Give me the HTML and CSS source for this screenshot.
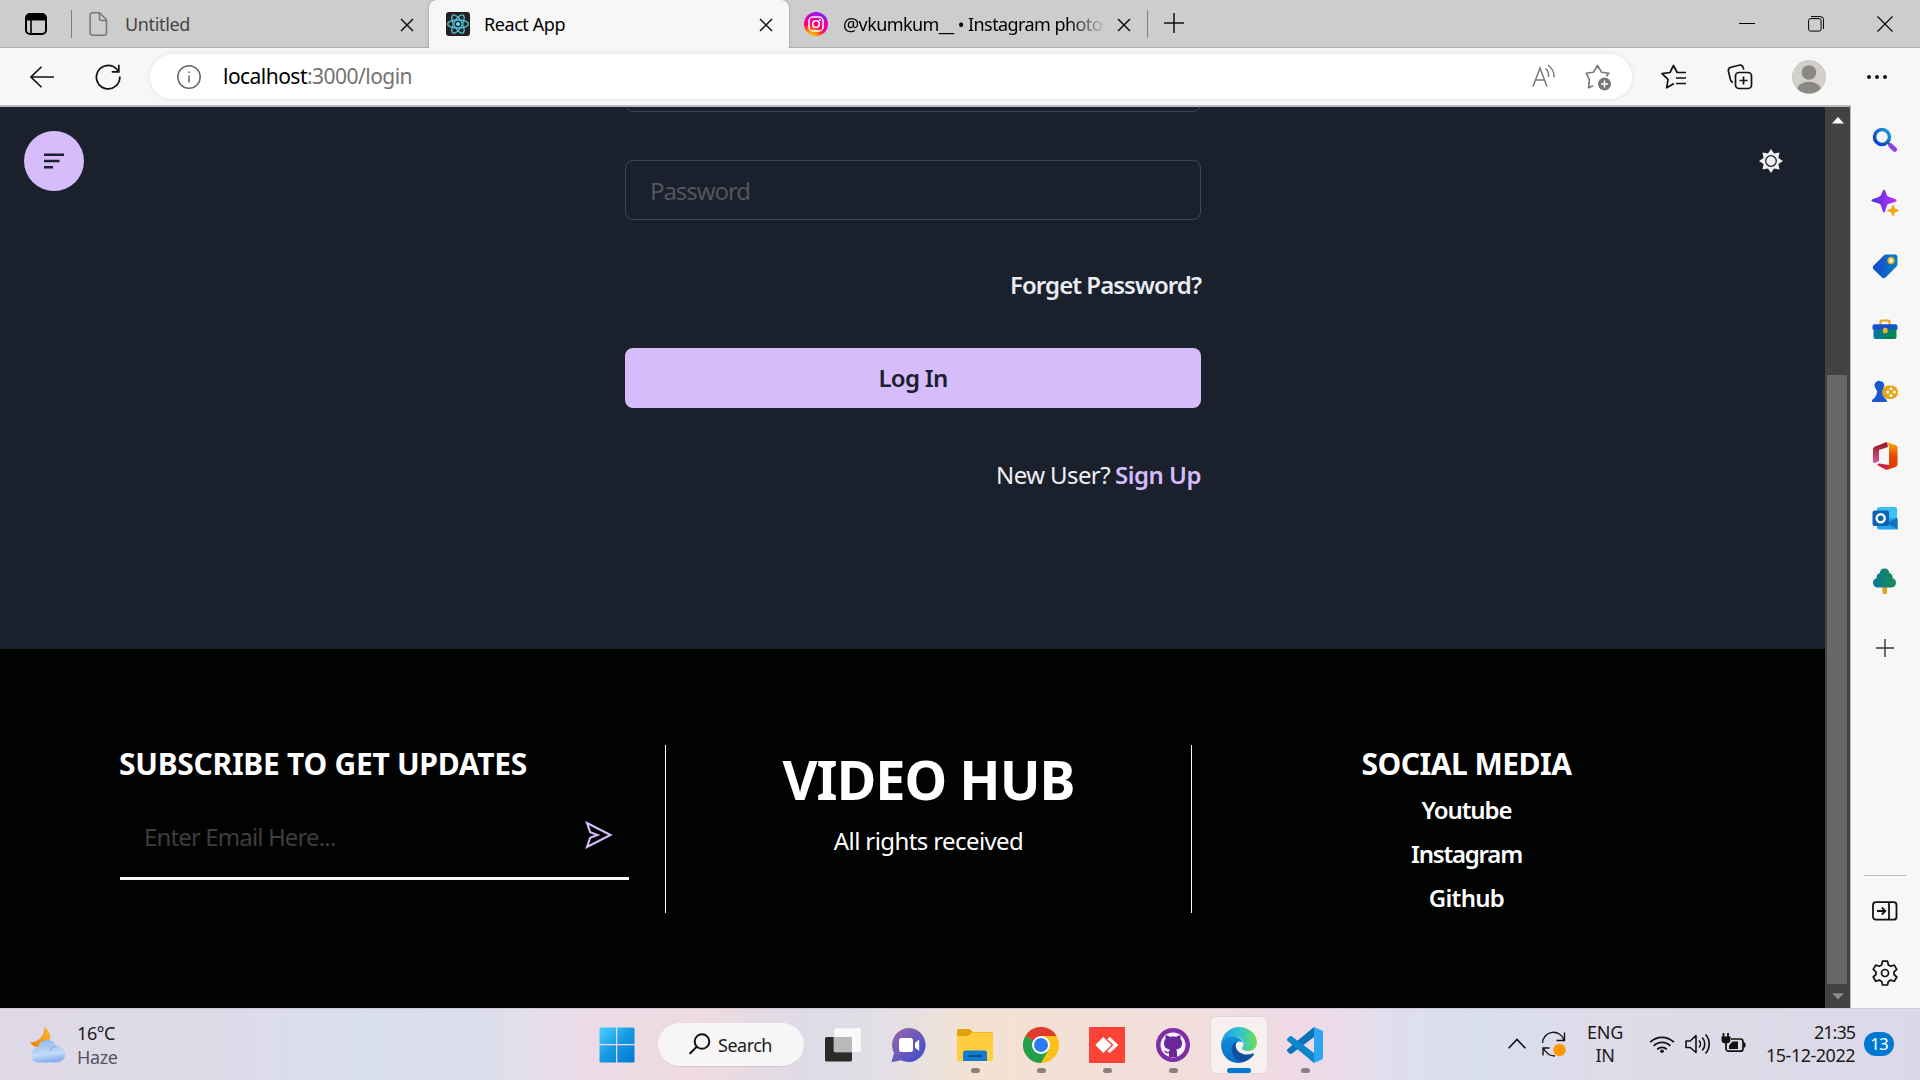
FILE: index.html
```html
<!DOCTYPE html>
<html lang="en">
<head>
<meta charset="utf-8">
<title>React App</title>
<link rel="stylesheet" href="styles.css">
</head>
<body>
<div class="desktop">

  <header class="tabstrip">
    <div class="workspaces">
      <svg width="24" height="24" viewBox="0 0 24 24" fill="none" stroke="#000" stroke-width="2"><rect x="2" y="2" width="20" height="20" rx="4"/><path d="M2 6a4 4 0 0 1 4-4h12a4 4 0 0 1 4 4v2.500H2z" fill="#000" stroke="none"/><path d="M7 8v14" stroke-width="1.600"/></svg>
    </div>
    <div class="tab tab-first">
      <svg class="favicon" width="24" height="24" viewBox="0 0 24 24" fill="none" stroke="#777" stroke-width="1.500"><path d="M5.500.8h7l7 7v13a2.400 2.400 0 0 1-2.400 2.400H5.500a2.400 2.400 0 0 1-2.400-2.400V3.200A2.400 2.400 0 0 1 5.500.8z"/><path d="M12.500 1v5.500a2 2 0 0 0 2 2h5"/></svg>
      <span class="tab-title muted">Untitled</span>
      <svg class="close" width="14" height="14" viewBox="0 0 14 14" stroke="#111" stroke-width="1.500"><path d="M1 1l12 12M13 1L1 13"/></svg>
    </div>
    <div class="tab tab-active">
      <svg class="favicon" width="24" height="24" viewBox="0 0 24 24"><rect width="24" height="24" rx="3" fill="#222"/><g fill="none" stroke="#53c1de" stroke-width="1.300"><ellipse cx="12" cy="12" rx="10.300" ry="4"/><ellipse cx="12" cy="12" rx="10.300" ry="4" transform="rotate(60 12 12)"/><ellipse cx="12" cy="12" rx="10.300" ry="4" transform="rotate(120 12 12)"/></g><circle cx="12" cy="12" r="2" fill="#61dafb"/></svg>
      <span class="tab-title">React App</span>
      <svg class="close" width="14" height="14" viewBox="0 0 14 14" stroke="#111" stroke-width="1.500"><path d="M1 1l12 12M13 1L1 13"/></svg>
    </div>
    <div class="tab tab-last">
      <svg class="favicon" width="24" height="24" viewBox="0 0 24 24"><defs><radialGradient id="ig" cx=".3" cy="1.050" r="1.100"><stop offset="0" stop-color="#ffd600"/><stop offset=".25" stop-color="#ff8a00"/><stop offset=".5" stop-color="#ff0169"/><stop offset=".75" stop-color="#e300b8"/><stop offset="1" stop-color="#7a1cff"/></radialGradient></defs><circle cx="12" cy="12" r="12" fill="url(#ig)"/><g fill="none" stroke="#fff" stroke-width="1.500"><rect x="5" y="5" width="14" height="14" rx="4"/><circle cx="12" cy="12" r="3.300"/></g><circle cx="16" cy="8" r="1" fill="#fff"/></svg>
      <span class="tab-title tab-fade">@vkumkum__ • Instagram photos</span>
      <svg class="close" width="14" height="14" viewBox="0 0 14 14" stroke="#111" stroke-width="1.500"><path d="M1 1l12 12M13 1L1 13"/></svg>
    </div>
    <svg class="new-tab" width="22" height="22" viewBox="0 0 22 22" stroke="#111" stroke-width="1.500"><path d="M11 1v20M1 11h20"/></svg>
    <div class="window-controls">
      <svg width="16" height="16" viewBox="0 0 16 16" stroke="#000" fill="none"><path d="M0 7.500h16"/></svg>
      <svg width="16" height="16" viewBox="0 0 16 16" stroke="#000" fill="none"><rect x=".6" y="2.600" width="12.500" height="12.500" rx="2"/><path d="M3 .6h9.500a3 3 0 0 1 3 3V13"/></svg>
      <svg width="16" height="16" viewBox="0 0 16 16" stroke="#000" fill="none" stroke-width="1.100"><path d="M.5.5l15 15M15.500.5l-15 15"/></svg>
    </div>
  </header>

  <nav class="toolbar">
    <svg class="back" width="24" height="22" viewBox="0 0 24 22" fill="none" stroke="#111" stroke-width="1.600"><path d="M24 11H1M11.500.800L1 11l10.500 10.200"/></svg>
    <svg class="reload" width="26" height="26" viewBox="0 0 26 26" fill="none" stroke="#111" stroke-width="1.700"><path d="M24.800 12.500A11.700 11.700 0 1 1 21.500 5l2 2.300"/><path d="M23.800.800v7h-7"/></svg>
    <div class="address">
      <svg width="24" height="24" viewBox="0 0 24 24" fill="none" stroke="#666" stroke-width="1.500"><circle cx="12" cy="12" r="11.200"/><path d="M12 10.500v7"/><circle cx="12" cy="7.200" r=".5" fill="#666" stroke-width="1"/></svg>
      <span class="url">localhost<span class="url-rest">:3000/login</span></span>
      <svg class="read-aloud" width="24" height="24" viewBox="0 0 24 24" fill="none" stroke="#777" stroke-width="1.500"><path d="M1 22.500L8 4l7 18.500M3.500 16h9M13.500 4.500c2.500 2 3.500 5 3 8.500M16 1c4 3 6.500 7.500 6 12.500"/></svg>
      <svg class="add-fav" width="28" height="28" viewBox="0 0 28 28"><path d="M8 21.800l-4.500 2 .9-8.300L1.200 9.200l7.300-1L12.500 1.500l4 6.700 7.300 1-2.500 3" fill="none" stroke="#777" stroke-width="1.600" stroke-linejoin="round"/><circle cx="19.500" cy="20" r="6.500" fill="#777"/><path d="M19.500 16.500v7M16 20h7" stroke="#fff" stroke-width="1.400"/></svg>
    </div>
    <div class="tool-icons">
      <svg width="26" height="26" viewBox="0 0 26 26" fill="none" stroke="#111" stroke-width="1.700" stroke-linejoin="round"><path d="M13 19.500l-7.300 4.300 1.300-8.500L1 9.700l8-1.200L12.500 1.500l3.700 7H25M15 14h10M15 19.500h10"/></svg>
      <svg width="26" height="26" viewBox="0 0 26 26" fill="none" stroke="#111" stroke-width="1.700"><rect x="8.500" y="8.500" width="16" height="16" rx="3.500"/><path d="M16.500 12.500v8M12.500 16.500h8M6 18.500c-1.500-.5-2.200-1.500-2.600-3L1.500 7.500C1 5 2 3.800 4 3.300l8-2c2.200-.5 3.800.3 4.300 2.700l.4 1.500"/></svg>
      <svg class="avatar" width="34" height="34" viewBox="0 0 34 34"><defs><clipPath id="av"><circle cx="17" cy="17" r="16.500"/></clipPath></defs><circle cx="17" cy="17" r="16.500" fill="#d2d0cc" stroke="#bbb9b5" stroke-width=".6"/><g fill="#8b8783" clip-path="url(#av)"><circle cx="17" cy="12.500" r="7.300"/><ellipse cx="17" cy="30" rx="12" ry="8.300"/></g></svg>
      <svg width="22" height="6" viewBox="0 0 22 6" fill="#111"><circle cx="3" cy="3" r="2"/><circle cx="11" cy="3" r="2"/><circle cx="19" cy="3" r="2"/></svg>
    </div>
  </nav>

  <div class="browser-body">
    <div class="page">
      <main class="login">
        <button class="menu-btn" aria-label="Menu"><svg width="20" height="16" viewBox="0 0 20 16" fill="#1a202c"><path d="M0 .5h20v2.600H0zM0 6.700h15.500v2.600H0zM0 13h9v2.600H0z"/></svg></button>
        <svg class="theme-btn" width="24" height="24" viewBox="0 0 24 24"><path fill="#f1f1f3" d="M12 0l3 4.600 5.500-1.100-1.100 5.500L24 12l-4.600 3 1.100 5.500-5.500-1.100L12 24l-3-4.600-5.500 1.100 1.100-5.500L0 12l4.600-3-1.100-5.500L9 4.600z"/><circle cx="12" cy="12" r="5.300" fill="#f1f1f3" stroke="#1a202c" stroke-width="1.300"/></svg>
        <form class="login-form">
          <div class="field field-email"></div>
          <div class="field"><span class="w-password">Password</span></div>
          <div class="forget">Forget Password?</div>
          <div class="login-btn">Log In</div>
          <div class="signup"><span class="new-user">New User?</span> <b>Sign Up</b></div>
        </form>
      </main>
      <footer class="footer">
        <section class="subscribe">
          <h2 class="sub-title">SUBSCRIBE TO GET UPDATES</h2>
          <div class="email-row">
            <span class="email-hint">Enter Email Here...</span>
            <svg width="28" height="28" viewBox="0 0 28 28" fill="none" stroke="#d6bcfa" stroke-width="2.100"><path d="M2 2l23.500 12L2 26l3.200-9.300 7.300-2.700-7.300-2.700z"/></svg>
          </div>
        </section>
        <section class="brand">
          <h1>VIDEO HUB</h1>
          <p>All rights received</p>
        </section>
        <section class="social">
          <h2>SOCIAL MEDIA</h2>
          <a class="yt">Youtube</a>
          <a class="insta">Instagram</a>
          <a class="gh">Github</a>
        </section>
      </footer>
    </div>
    <div class="scrollbar">
      <svg width="12" height="7" viewBox="0 0 12 7"><path d="M0 6.500L6 0l6 6.500z" fill="#fff"/></svg>
      <div class="thumb"></div>
      <svg class="down" width="12" height="7" viewBox="0 0 12 7"><path d="M0 .3L6 6.500l6-6.200z" fill="#8b8b8b"/></svg>
    </div>
    <aside class="sidebar">
      <svg width="28" height="28" viewBox="0 0 28 28"><defs><linearGradient id="b1" x1="0" y1="1" x2="1" y2="0"><stop offset="0" stop-color="#0a35c4"/><stop offset="1" stop-color="#1aa0d8"/></linearGradient><linearGradient id="p1" x1="0" x2="1"><stop offset="0" stop-color="#4a35d8"/><stop offset="1" stop-color="#c32cff"/></linearGradient></defs><circle cx="11" cy="11" r="7.500" fill="none" stroke="url(#b1)" stroke-width="3.500"/><path d="M16.500 16.500l3 3" stroke="#444" stroke-width="1.800"/><path d="M19.500 19.500l4.300 4" stroke="#8a45e8" stroke-width="4.500" stroke-linecap="round"/></svg>
      <svg width="28" height="28" viewBox="0 0 28 28"><path d="M13 1c1 0 1.500 5 3 6.500S25 10 25 11.500s-7.500 2-9 3.500-2 8-3 8-1.700-6.500-3.200-8S1 12.500 1 11.500 8.300 9 9.800 7.500 12 1 13 1z" fill="url(#p1)" stroke="url(#p1)" stroke-width="1.200"/><path d="M22 16c.8 0 1 3 1.800 3.700s3.700 1 3.700 1.800-3 1-3.700 1.800S22.800 27 22 27s-1-3-1.700-3.700-3.800-1-3.800-1.800 3-1 3.800-1.800S21.200 16 22 16z" fill="#eaa80c" stroke="#eaa80c" stroke-width=".6"/></svg>
      <svg width="28" height="28" viewBox="0 0 28 28"><path d="M15 2.500h9c1.500 0 2.500 1 2.500 2.500v7c0 1-.4 2-1.200 2.700L14.500 25.500c-1 1-2.500 1-3.500 0l-8.500-8.300c-1-1-1-2.700.2-3.700L13 3.200c.6-.5 1.200-.7 2-.7z" fill="url(#b2)"/><defs><linearGradient id="b2" x1="0" x2="1"><stop offset="0" stop-color="#1846cf"/><stop offset="1" stop-color="#0880bd"/></linearGradient></defs><circle cx="20" cy="8.500" r="2.800" fill="#f4f4f4" stroke="#e9b41d" stroke-width="1.700"/></svg>
      <svg width="28" height="28" viewBox="0 0 28 28"><path d="M9.500 9.500V7a1.500 1.500 0 0 1 1.500-1.500h6A1.500 1.500 0 0 1 18.500 7v2.500" fill="none" stroke="#e8a317" stroke-width="2.200"/><path d="M2.500 12h23v10a2 2 0 0 1-2 2h-19a2 2 0 0 1-2-2z" fill="url(#g1)"/><defs><linearGradient id="g1" x1="0" x2="1"><stop offset="0" stop-color="#0875a8"/><stop offset="1" stop-color="#058a42"/></linearGradient></defs><path d="M3.500 9.300h21a2 2 0 0 1 2 2V14.500h-25v-3.200a2 2 0 0 1 2-2z" fill="#1450cb"/><rect x="12" y="12.800" width="4.500" height="5.500" rx="1.500" fill="#f0b52a"/></svg>
      <svg width="28" height="28" viewBox="0 0 28 28"><rect x="11" y="7.500" width="16" height="13.500" rx="6.700" fill="#e4a418"/><g fill="#fff"><circle cx="20" cy="10.800" r="1.500"/><circle cx="20" cy="17.400" r="1.500"/><circle cx="16.700" cy="14.100" r="1.500"/><circle cx="23.300" cy="14.100" r="1.500"/></g><path d="M9 3a4.500 4.500 0 0 1 3 7.700v1.500h-1c0 4 1 6 3 8.300 1.500.500 2 1.500 2 3.500H1c0-2 .5-3 2-3.500 2-2.300 3-4.300 3.200-8.300H5v-1.500A4.500 4.500 0 0 1 9 3z" fill="#1c57cd"/></svg>
      <svg width="28" height="30" viewBox="0 0 28 30"><defs><linearGradient id="o1" y2="1" x2="0"><stop offset="0" stop-color="#8c1717"/><stop offset="1" stop-color="#e0559c"/></linearGradient><linearGradient id="o2" y2="1" x2="0"><stop offset="0" stop-color="#ffae00"/><stop offset=".5" stop-color="#e8480a"/><stop offset="1" stop-color="#d83b01"/></linearGradient></defs><path d="M16 1L4 5.500C2.500 6.200 2 7 2 8.500v12c0 1.500 1.500 2 2.800 1L8 20V9l9-3z" fill="url(#o1)"/><path d="M15.500 1l9 3c1.200.4 2 1.300 2 2.700v16.500c0 1.400-.7 2.300-2 2.700L15.500 29 18 25V5z" fill="url(#o2)"/><path d="M8 22.500l10 1.500v2l-2.500 3-8.500-4.500c-1-.7-.3-2 1-2z" fill="#cf2140"/></svg>
      <svg class="outlook" width="28" height="28" viewBox="0 0 28 28"><path d="M8 3h16a2 2 0 0 1 2 2v9H6V5a2 2 0 0 1 2-2z" fill="#3bc0f4"/><path d="M6 14h20.500v10.500a1 1 0 0 1-1 1H8a2 2 0 0 1-2-2z" fill="#21a6ec"/><path d="M26.500 14v11.500L15 19z" fill="#1271ba"/><rect x="1.500" y="6.500" width="16.500" height="15.500" rx="2" fill="#0b64b5"/><circle cx="9.700" cy="14.200" r="4" fill="none" stroke="#fff" stroke-width="2.400"/></svg>
      <svg width="28" height="28" viewBox="0 0 28 28"><rect x="11.500" y="19" width="4.500" height="8" rx="1" fill="#eda112"/><path d="M13.500 1.500c3 0 4.800 2 4.800 4.500 2.200.5 3.700 2.300 3.200 5 2.200.8 3.500 2.200 3.500 4.700 0 3-2 4.800-5 4.800H7c-3 0-5-1.800-5-4.500 0-2.500 1.500-4.200 3.700-5-.5-2.500 1-4.500 3.200-5 0-2.500 1.800-4.500 4.600-4.500z" fill="url(#g2)"/><defs><linearGradient id="g2" x1="0" x2="1"><stop offset="0" stop-color="#0b7794"/><stop offset="1" stop-color="#198c54"/></linearGradient></defs></svg>
      <svg class="side-plus" width="18" height="18" viewBox="0 0 18 18" stroke="#333" stroke-width="1.400"><path d="M9 0v18M0 9h18"/></svg>
      <div class="side-bottom">
        <svg width="26" height="20" viewBox="0 0 26 20" fill="none" stroke="#111" stroke-width="1.800"><rect x="1" y="1.200" width="23.500" height="17.500" rx="3"/><path d="M17 1v18M5 10h8M9.800 6.500l3.500 3.500-3.500 3.500"/></svg>
        <svg width="26" height="26" viewBox="0 0 26 26" fill="none" stroke="#111" stroke-width="1.700" stroke-linejoin="round"><circle cx="13" cy="13" r="3.500"/><path d="M10.500 1.200h5l.9 3.800 2.300 1.300 3.600-1.200 2.500 4.300-2.800 2.500v2.600l2.800 2.500-2.500 4.300-3.600-1.200-2.300 1.300-.9 3.600h-5l-.9-3.600-2.300-1.300-3.600 1.200-2.500-4.300L4 14.500v-2.600L1.200 9.400l2.500-4.300 3.600 1.200L9.600 5z"/></svg>
      </div>
    </aside>
  </div>

  <div class="taskbar">
    <div class="weather">
      <svg width="36" height="36" viewBox="0 0 36 36"><defs><linearGradient id="m" x1="1" y1="0" x2="0" y2="1"><stop offset="0" stop-color="#f7bd34"/><stop offset="1" stop-color="#ee7b13"/></linearGradient><linearGradient id="c" x2=".2" y2="1"><stop offset="0" stop-color="#8db5ee"/><stop offset=".7" stop-color="#c2dbf6"/><stop offset="1" stop-color="#8bb0ee"/></linearGradient></defs><path d="M14 0c6 3 8 10 4 15.500S5 23 0 15.500C8 15.500 15 9 14 0z" fill="url(#m)"/><path d="M9 35.500a7.500 7.500 0 0 1-1-15 9.500 9.500 0 0 1 18-1.800 8.400 8.400 0 0 1 1.500 16.800z" fill="url(#c)"/><path d="M19.500 23.500a8.400 8.400 0 0 1 7-4.500" stroke="#7ba3e4" stroke-width="1" fill="none"/></svg>
      <div class="weather-text"><span class="temp">16°C</span><span class="haze">Haze</span></div>
    </div>
    <div class="apps">
      <svg class="start" width="36" height="36" viewBox="0 0 36 36"><defs><linearGradient id="w" x2="1" y2="1"><stop offset="0" stop-color="#4cd0ff"/><stop offset=".5" stop-color="#1799e3"/><stop offset="1" stop-color="#0077d6"/></linearGradient></defs><path fill="url(#w)" d="M2 .500h15v16.500H.500V2A1.500 1.500 0 0 1 2 .500zM18.200.500H34A1.500 1.500 0 0 1 35.500 2v15H18.200zM.500 18.200H17v17.300H2A1.500 1.500 0 0 1 .500 34zM18.200 18.200h17.300V34a1.500 1.500 0 0 1-1.500 1.500H18.200z"/></svg>
      <div class="search"><svg width="22" height="22" viewBox="0 0 22 22" fill="none" stroke="#111" stroke-width="2" stroke-linecap="round"><circle cx="13" cy="8.500" r="7.300"/><path d="M7.500 14L1.200 20.300"/></svg><span>Search</span></div>
      <div class="tiles">
        <div class="tile"><svg width="36" height="36" viewBox="0 0 36 36"><rect x="0" y="10" width="27" height="24.500" rx="1.500" fill="#2b2b2a"/><rect x="9" y="1" width="27" height="24" rx="1.500" fill="#fafafa" stroke="#ddd" stroke-width=".6"/><path d="M9 10h18v15H9z" fill="#b9b9b9"/></svg></div>
        <div class="tile"><svg width="36" height="36" viewBox="0 0 36 36"><defs><linearGradient id="t" x1="0" y1=".3" x2=".7" y2="1"><stop offset="0" stop-color="#8b64ad"/><stop offset="1" stop-color="#4a50c8"/></linearGradient></defs><path d="M18 1a17 17 0 1 1-8 32.200L1.500 35c-.8 0-1-.6-.7-1.200L3 26A17 17 0 0 1 18 1z" fill="url(#t)"/><rect x="8" y="11" width="14" height="14" rx="2.500" fill="#fff"/><path d="M24 16l3.500-3h.7v10.500h-.7L24 20.500z" fill="#fff"/></svg></div>
        <div class="tile running"><svg width="36" height="36" viewBox="0 0 36 36"><path d="M0 3.500A1.500 1.500 0 0 1 1.500 2h11L16 5h18.500A1.500 1.500 0 0 1 36 6.500V12H0z" fill="#e0a30c"/><path d="M0 9h11l4-3.500h20A1 1 0 0 1 36 6.500V33a1 1 0 0 1-1 1H1a1 1 0 0 1-1-1z" fill="#ffce3f"/><path d="M6 34V26a2.500 2.500 0 0 1 2.500-2.500h19A2.500 2.500 0 0 1 30 26v8z" fill="#0f7cd0"/><path d="M11 29h14" stroke="#0b4f96" stroke-width="2"/></svg></div>
        <div class="tile running"><svg width="36" height="36" viewBox="0 0 36 36"><circle cx="18" cy="18" r="18" fill="#fbc116"/><path d="M18 18L2.400 9A18 18 0 0 1 33.600 9H18z" fill="#e03a2e"/><path d="M2.400 9A18 18 0 0 0 18 36l7.800-13.500L18 18z" fill="#24a04a"/><circle cx="18" cy="18" r="9" fill="#fff"/><circle cx="18" cy="18" r="7" fill="#2f7bf0"/></svg></div>
        <div class="tile running"><svg width="36" height="36" viewBox="0 0 36 36"><path fill="#fd4238" d="M0 0h36v36H0z"/><path d="M6.300 18l8-8 8 8-8 8z" fill="#fff"/><path d="M19.500 11l7.500 7-7.500 7" fill="none" stroke="#fff" stroke-width="3.300"/></svg></div>
        <div class="tile running"><svg width="36" height="36" viewBox="0 0 36 36"><circle cx="18" cy="18" r="17" fill="#7d2fa8"/><circle cx="18" cy="18" r="12.500" fill="#f3eef7"/><path d="M14 30v-4c-3 .8-4-.8-5-2.500 2 0 2.500 2 5 1.300 0-1 .4-1.800 1-2.300-4-.5-6-2.300-6-6.200 0-1.800.5-3 1.500-4-.3-1.500-.2-2.800.3-4 1.700 0 3 .8 4 1.600 2-.5 4.400-.5 6.400 0 1-.8 2.300-1.600 4-1.600.5 1.200.6 2.500.3 4 1 1 1.500 2.200 1.500 4 0 3.900-2 5.700-6 6.200.7.700 1 1.600 1 3V30z" fill="#6a2797"/></svg></div>
        <div class="tile current"><svg width="36" height="36" viewBox="0 0 36 36"><defs><linearGradient id="e1" x1="0" x2="1"><stop offset="0" stop-color="#1a9bdc"/><stop offset=".5" stop-color="#2ec3d6"/><stop offset="1" stop-color="#6be04e"/></linearGradient><linearGradient id="e2" y2="1" x2="0"><stop offset="0" stop-color="#128fd8"/><stop offset="1" stop-color="#0a6cc4"/></linearGradient></defs><path d="M0 17C1 7 9 0 18 0c10 0 18 7 18 15.500 0 5-4 8.500-8.500 8.500-4 0-6.500-1.500-6.500-2.800 0-1 1.500-1.700 1.500-4.200 0-4-4-7-9.500-7C7 10 2 13 0 17z" fill="url(#e1)"/><path d="M0 17.500c1.500-5 6-8 11-8 6 0 10 3 11 6.500-3-3-8-1-8 5 0 7 6 11.500 12 10.500C23 34.500 20 36 17 36 7 35.500 0 28 0 17.500z" fill="url(#e2)"/><path d="M15 15c-7 3-5 17 6 20.500 5-1.200 9.500-4 12-8 .4-.8-.2-1.200-1-.9C24 29.500 12.500 26 15 15z" fill="#0f4f9f"/></svg></div>
        <div class="tile running"><svg width="36" height="36" viewBox="0 0 36 36"><path d="M27 0v10L5 26.500c-1 .7-1.800.6-2.500 0L.6 24.700c-.8-.8-.8-1.900 0-2.600z" fill="#0873b8"/><path d="M27 36V26L5 9.500c-1-.7-1.800-.6-2.500 0L.6 11.300c-.8.800-.8 1.900 0 2.600z" fill="#0c86cd"/><path d="M27 0l7.500 3.300c1 .4 1.500 1.200 1.500 2.200v25c0 1-.5 1.800-1.500 2.200L27 36z" fill="#2aa7f0"/></svg></div>
      </div>
    </div>
    <div class="tray">
      <svg class="chev" width="18" height="11" viewBox="0 0 18 11" fill="none" stroke="#111" stroke-width="1.600"><path d="M.6 10.200L9 1.500l8.400 8.700"/></svg>
      <svg class="sync" width="26" height="26" viewBox="0 0 26 26" fill="none" stroke="#111" stroke-width="1.400"><path d="M1.500 12A11 11 0 0 1 23 9M23.500 1.500v8h-8M2 24.500V17h6.500M2.500 17.500C5 22 9 25 14 25"/><circle cx="18.500" cy="19" r="6.200" fill="#ff9800" stroke="none"/></svg>
      <div class="lang"><span>ENG</span><span>IN</span></div>
      <svg class="wifi" width="26" height="20" viewBox="0 0 26 20" fill="none" stroke="#111" stroke-width="1.800"><path d="M1.200 8.200a16.700 16.700 0 0 1 23.600 0M4.700 11.800a11.700 11.700 0 0 1 16.600 0M8.200 15.300a6.800 6.800 0 0 1 9.600 0"/><circle cx="13" cy="17.300" r="1.800" fill="#111" stroke="none"/></svg>
      <svg class="vol" width="26" height="22" viewBox="0 0 26 22" fill="none" stroke="#111" stroke-width="1.600" stroke-linejoin="round"><path d="M1 8v6.500h4.200L11 19.500V2.500L5.200 8zM14 7.500a5 5 0 0 1 0 7M17.200 4.500a9.500 9.500 0 0 1 0 13M20.500 1.500a14 14 0 0 1 0 19"/></svg>
      <svg class="bat" width="26" height="22" viewBox="0 0 26 22" fill="none" stroke="#111" stroke-width="1.700"><path d="M10 6h9.500a2.500 2.500 0 0 1 2.500 2.500v7.200a2.500 2.500 0 0 1-2.500 2.500H7.500A2.500 2.500 0 0 1 5 15.700V10"/><path d="M11.500 8.500H17v7.500H8v-3.500z" fill="#111" stroke="none"/><path d="M2.500 0v4M7 0v4" stroke-width="1.800"/><path d="M.5 3.500h9v3.500a3.500 3.500 0 0 1-3.500 3.200H4A3.500 3.500 0 0 1 .5 7zM22.500 9.500h1.200c1.200 0 1.300 5 0 5h-1.200z" fill="#111" stroke="none"/></svg>
      <div class="clock"><span class="time">21:35</span><span class="date">15-12-2022</span></div>
      <div class="badge"><span>13</span></div>
    </div>
  </div>
</div>
</body>
</html>
```
FILE: styles.css
```css
* { box-sizing: border-box; }
body { margin: 0; font-family: "Noto Sans", "Open Sans", sans-serif; overflow: hidden; }
h1, h2, p { margin: 0; }
svg { display: block; flex: none; }
span { white-space: nowrap; }

.desktop { width: 1920px; height: 1080px; display: flex; flex-direction: column; }

/* tab strip */
.tabstrip { height: 48px; background: #cdcdcd; display: flex; align-items: center; box-shadow: inset 0 -2px 1px -1px #aaa; }
.workspaces { width: 72px; height: 28px; border-right: 1.500px solid #808080; display: flex; align-items: center; padding-left: 24px; }
.tab { height: 48px; display: flex; align-items: center; font-size: 18px; }
.tab-first { width: 357px; padding: 0 15px 0 15px; letter-spacing: -.35px; }
.tab-active { width: 360px; padding: 0 16px 0 17px; background: #f7f7f7; border-radius: 8px 8px 0 0; letter-spacing: -.43px; box-shadow: 0 0 3px rgba(0,0,0,.3); clip-path: inset(0 -4px); }
.tab-last { width: 359px; padding: 0 17px 0 15px; letter-spacing: -.58px; position: relative; }
.tab-last::after { content: ""; position: absolute; right: 0; top: 10px; height: 28px; width: 1.500px; background: #808080; }
.tab-title { margin-left: 14px; line-height: 24px; flex: 1; padding-bottom: 1px; }
.tab-title.muted { color: #444; margin-left: 14px; }
.tab-title.tab-fade { margin-left: 15px; margin-right: 11px; overflow: hidden; width: 262px; -webkit-mask-image: linear-gradient(90deg, #000 225px, transparent 263px); mask-image: linear-gradient(90deg, #000 225px, transparent 263px); }
.close { margin-top: 1px; }
.new-tab { margin-left: 15px; margin-bottom: 2px; }
.window-controls { margin-left: auto; display: flex; gap: 53px; padding-right: 27px; }

/* toolbar */
.toolbar { height: 57px; background: #f7f7f7; display: flex; align-items: center; padding-left: 30px; }
.reload { margin-left: 41px; }
.address { margin-left: 29px; width: 1482px; height: 45px; border-radius: 23px; background: #fff; box-shadow: 0 0 5px rgba(0,0,0,.1); display: flex; align-items: center; padding: 0 19px 0 27px; }
.url { font-size: 21px; letter-spacing: -.53px; margin-left: 22px; line-height: 28px; flex: 1; color: #000; padding-bottom: 1px; }
.url-rest { color: #737373; }
.read-aloud { margin-right: 29px; margin-bottom: 2px; }
.add-fav { margin-top: 3px; }
.tool-icons { display: flex; align-items: center; margin-left: 29px; gap: 40px; }
.avatar { margin-left: -1px; }

/* browser body */
.browser-body { height: 903px; background: #f7f7f7; display: flex; }
.page { width: 1825px; border-top: 2px solid #bbb; display: flex; flex-direction: column; }
.login { height: 542px; background: #1a202c; overflow: hidden; position: relative; }
.menu-btn { position: absolute; left: 24px; top: 24px; width: 60px; height: 60px; border: 0; border-radius: 50%; background: #d6bcfa; display: flex; align-items: center; justify-content: center; }
.theme-btn { position: absolute; left: 1759px; top: 42px; }
.login-form { width: 576px; margin: -55px auto 0 625px; display: flex; flex-direction: column; font-size: 24px; line-height: 36px; }
.field { height: 60px; border: 1px solid #3f4552; border-radius: 8px; color: #51555e; padding: 12px 24px; letter-spacing: -1.070px; }
.field-email { margin-bottom: 48px; }
.forget { margin: 47px 0 45px; text-align: right; font-weight: 600; color: #e9ecf2; letter-spacing: -.95px; }
.login-btn { height: 60px; border-radius: 8px; background: #d6bcfa; color: #1a202c; text-align: center; line-height: 60px; font-weight: 600; letter-spacing: -.73px; }
.signup { margin-top: 49px; display: flex; gap: 5px; justify-content: flex-end; color: #eef0f4; }
.signup b { color: #d6bcfa; font-weight: 600; letter-spacing: -.5px; }
.new-user { letter-spacing: -.6px; }

.footer { height: 359px; background: #010202; color: #fff; padding: 96px 84px 0 120px; display: grid; grid-template-columns: 546px 526px 549px; grid-template-rows: 168px; text-align: center; }
.footer h2 { font-size: 30px; line-height: 38px; font-weight: 700; letter-spacing: -.5px; }
.subscribe { border-right: 1.500px solid #fff; padding-right: 36px; }
.subscribe h2.sub-title { text-align: left; letter-spacing: -.28px; margin-left: -1px; }
.email-row { margin-top: 22px; height: 75px; border-bottom: 3px solid #f5f7fa; padding: 0 16px 12px 24px; display: flex; justify-content: space-between; align-items: center; }
.email-hint { font-size: 24px; color: #3d3d3f; letter-spacing: -.87px; padding-top: 2px; }
.brand { border-right: 1.500px solid #fff; }
.brand h1 { font-size: 54px; line-height: 68px; letter-spacing: -.96px; }
.brand p { font-size: 24px; line-height: 36px; letter-spacing: -.6px; margin-top: 10px; }
.social a { display: block; font-size: 24px; font-weight: 600; line-height: 36px; margin-top: 8px; }
.social .yt { letter-spacing: -1.070px; margin-top: 9px; }
.insta { letter-spacing: -1.210px; }
.gh { letter-spacing: -.7px; }

.scrollbar { width: 26px; background: #424242; border-top: 2px solid #bbb; border-right: 1px solid #bbb; padding: 10px 3px 0 2px; }
.scrollbar svg { margin-left: 5px; }
.thumb { height: 609px; margin-top: 251px; background: #686868; }
.scrollbar .down { margin-top: 9px; }

.sidebar { display: flex; flex-direction: column; align-items: center; padding: 21px 1px 0 0; gap: 35px; flex: 1; }
.outlook { margin-top: -2px; }
.side-plus { margin-top: 9px; }
.side-bottom { margin-top: auto; width: 42px; border-top: 1.500px solid #bcbcbc; padding: 25px 0 22px; display: flex; flex-direction: column; align-items: center; gap: 39px; }

/* taskbar */
.taskbar { height: 72px; border-top: 1px solid #cfc8d6; display: grid; grid-template-columns: 590px 1fr auto; align-items: center; font-size: 18px; color: #1b1b1d;
  background: linear-gradient(90deg, #dfd9e7 0, #dedae8 200px, #d9dfed 370px, #dfdfec 500px, #ecdbe7 590px, #efdbdf 700px, #dedbe7 800px, #e3dfe6 890px, #f3e2d2 970px, #f3e0d8 1080px, #f2dedd 1200px, #eed9e8 1320px, #dfdeee 1400px, #d9dfef 1480px, #dfdbe9 1600px, #dcd8e7 1920px); }
.weather { display: flex; padding-left: 30px; gap: 11px; align-items: center; }
.weather-text { display: flex; flex-direction: column; line-height: 24px; }
.temp { letter-spacing: -.42px; }
.haze { color: #56545c; letter-spacing: -.4px; }
.apps { display: flex; align-items: center; padding-left: 9px; }
.search { margin-left: 23px; width: 146px; height: 44px; border-radius: 22px; background: #f8f5f7; border-bottom: 1px solid #d3c9d1; display: flex; align-items: center; padding-left: 31px; gap: 7px; letter-spacing: -.5px; }
.search span { padding-top: 2px; }
.tiles { display: flex; gap: 10px; margin-left: 11px; }
.tile { width: 56px; height: 56px; display: flex; align-items: center; justify-content: center; position: relative; }
.running::after { content: ""; position: absolute; left: 24px; bottom: 0; width: 9px; height: 5px; border-radius: 2.500px; background: #8a8080; }
.current { background: #f8eff1; border-radius: 5px; box-shadow: 0 0 0 1px #e6d5da; }
.current::after { content: ""; position: absolute; left: 16px; bottom: 0; width: 24px; height: 5px; border-radius: 2.500px; background: #0078d4; }
.tray { display: flex; align-items: center; padding-right: 26px; }
.chev { margin-bottom: 2px; }
.sync { margin-left: 15px; margin-right: -1px; margin-bottom: 2px; }
.lang { width: 36px; margin-left: 21px; display: flex; flex-direction: column; align-items: center; line-height: 23px; letter-spacing: -.27px; margin-top: -1px; }
.wifi { margin-left: 26px; margin-bottom: 2px; }
.vol { margin-left: 10px; margin-bottom: 1px; }
.bat { margin-left: 10px; margin-bottom: 2px; }
.clock { width: 90px; margin-left: 18px; margin-right: 1px; display: flex; flex-direction: column; align-items: flex-end; line-height: 23px; margin-top: -2px; }
.time { letter-spacing: -1px; }
.date { letter-spacing: -.5px; }
.badge { margin-left: 8px; margin-bottom: 1px; width: 30px; height: 24px; border-radius: 12px; background: #0078d4; color: #fff; font-size: 17px; line-height: 23px; text-align: center; letter-spacing: -1px; }
```
